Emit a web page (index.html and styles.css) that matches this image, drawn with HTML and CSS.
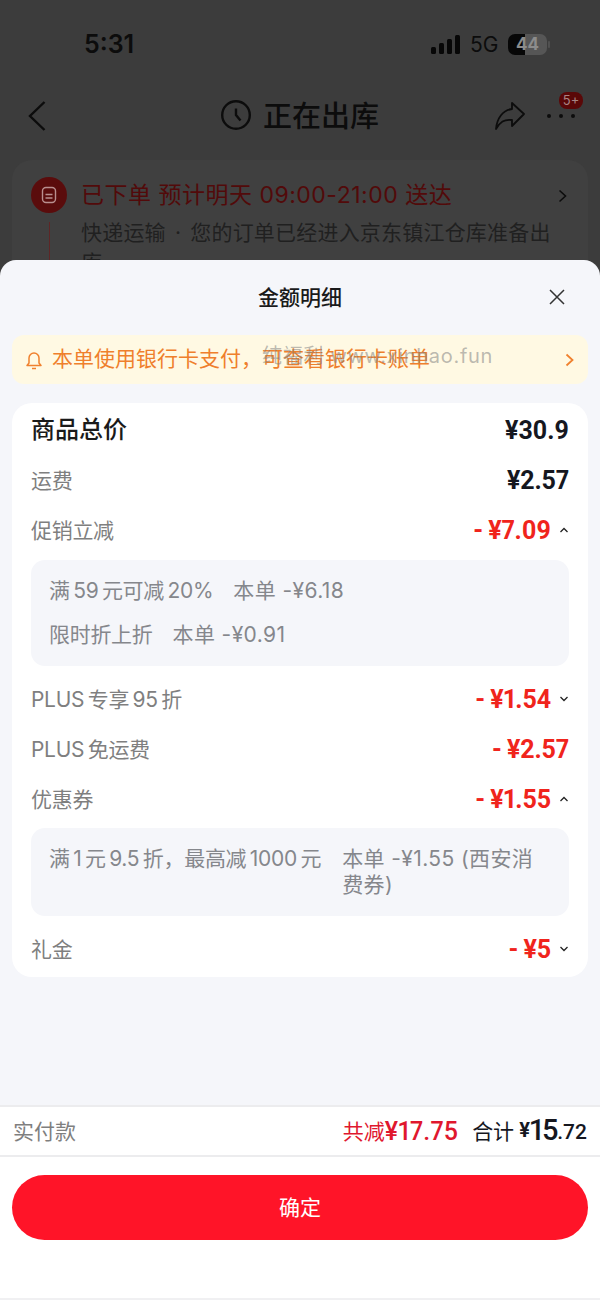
FILE: index.html
```html
<!DOCTYPE html>
<html lang="zh">
<head>
<meta charset="utf-8">
<title>金额明细</title>
<link rel="stylesheet" href="styles.css">
</head>
<body>
<div class="page">
  <div class="behind">
    <div class="status">
      <span class="time">5:31</span>
      <div class="status-right">
        <svg class="signal" width="29" height="19" viewBox="0 0 29 19"><rect x="0" y="12" width="5" height="7" rx="1.500"/><rect x="8" y="8" width="5" height="11" rx="1.500"/><rect x="16" y="4" width="5" height="15" rx="1.500"/><rect x="24" y="0" width="5" height="19" rx="1.500"/></svg>
        <span class="net">5G</span>
        <div class="battery"><span class="battery-num">44</span></div>
        <span class="battery-cap"></span>
      </div>
    </div>
    <div class="nav">
      <svg class="back" width="22" height="32" viewBox="0 0 22 32"><path d="M19.500 3 5 17l14.500 14" fill="none" stroke="#0c0c0c" stroke-width="2.400"/></svg>
      <div class="nav-title">
        <svg width="30" height="30" viewBox="0 0 30 30"><circle cx="15" cy="15" r="13.800" fill="none" stroke="#0c0c0c" stroke-width="2.400"/><path d="M15 8.500V15l4.500 5.500" fill="none" stroke="#0c0c0c" stroke-width="2.400"/></svg>
        <span class="nav-text">正在出库</span>
      </div>
      <svg class="share" width="32" height="30" viewBox="0 0 32 30"><path d="M18 2 30 13 18 25v-6C10 18 6 21 2 28 3 17 9 9 18 8Z" fill="none" stroke="#0c0c0c" stroke-width="1.800" stroke-linejoin="round"/></svg>
      <div class="more"><i></i><i></i><i></i><span class="badge">5+</span></div>
    </div>
    <div class="order">
      <div class="order-head">
        <span class="order-icon"><svg width="16" height="18" viewBox="0 0 16 18"><rect x="1.500" y="1.500" width="13" height="15" rx="3.500" fill="none" stroke="#b98f8f" stroke-width="1.400"/><path d="M4.500 8.500h7M4.500 12h7" stroke="#b98f8f" stroke-width="1.300"/></svg></span>
        <span class="order-title">已下单 预计明天 09:00-21:00 送达</span>
        <svg class="order-arrow" width="9" height="14" viewBox="0 0 9 14"><path d="m1.500 1.500 6 5.500-6 5.500" fill="none" stroke="#0c0c0c" stroke-width="1.600"/></svg>
      </div>
      <div class="order-body">
        <span class="order-line"></span>
        <p class="order-text">快递运输 · 您的订单已经进入京东镇江仓库准备出库</p>
      </div>
    </div>
  </div>

  <div class="sheet">
    <div class="sheet-head">
      <h1 class="sheet-title">金额明细</h1>
      <svg class="close" width="18" height="18" viewBox="0 0 18 18"><path d="M2 2l14 14M16 2 2 16" stroke="#333" stroke-width="1.500" fill="none"/></svg>
    </div>
    <div class="notice">
      <svg width="18" height="22" viewBox="0 0 18 22"><path d="M2 16.500h14l-2-2.500V9a5 5 0 0 0-10 0v5Z" fill="none" stroke="#f0812e" stroke-width="1.500" stroke-linejoin="round"/><path d="M7 19.500h4" stroke="#f0812e" stroke-width="1.500"/></svg>
      <span class="notice-text">本单使用银行卡支付，可查看银行卡账单</span>
      <span class="watermark">纯福利 www.xinhao.fun</span>
      <svg class="notice-arrow" width="9" height="14" viewBox="0 0 9 14"><path d="m1.500 1.500 6 5.500-6 5.500" fill="none" stroke="#f0812e" stroke-width="1.800"/></svg>
    </div>
    <div class="card">
      <div class="row total"><span class="label-main">商品总价</span><span class="amount dark">¥30.9</span></div>
      <div class="row"><span class="label">运费</span><span class="amount dark">¥2.57</span></div>
      <div class="row"><span class="label">促销立减</span><span class="amount red has-caret">- ¥7.09<svg class="caret" width="10" height="6" viewBox="0 0 10 6"><path d="M1.500 5 5 1.500 8.500 5" fill="none" stroke="#222" stroke-width="1.300"/></svg></span></div>
      <div class="detail">
        <div class="detail-line"><span>满&thinsp;59&thinsp;元可减&thinsp;20%</span><span>本单 -¥6.18</span></div>
        <div class="detail-line"><span>限时折上折</span><span>本单 -¥0.91</span></div>
      </div>
      <div class="row"><span class="label">PLUS&thinsp;专享&thinsp;95&thinsp;折</span><span class="amount red has-caret">- ¥1.54<svg class="caret" width="10" height="6" viewBox="0 0 10 6"><path d="M1.500 1 5 4.500 8.500 1" fill="none" stroke="#222" stroke-width="1.300"/></svg></span></div>
      <div class="row"><span class="label">PLUS&thinsp;免运费</span><span class="amount red">- ¥2.57</span></div>
      <div class="row"><span class="label">优惠券</span><span class="amount red has-caret">- ¥1.55<svg class="caret" width="10" height="6" viewBox="0 0 10 6"><path d="M1.500 5 5 1.500 8.500 5" fill="none" stroke="#222" stroke-width="1.300"/></svg></span></div>
      <div class="detail detail-wrap">
        <div class="detail-line"><span class="nowrap">满&thinsp;1&thinsp;元&thinsp;9.5&thinsp;折，最高减&thinsp;1000&thinsp;元</span><span>本单 -¥1.55 (西安消费券)</span></div>
      </div>
      <div class="row"><span class="label">礼金</span><span class="amount red has-caret">- ¥5<svg class="caret" width="10" height="6" viewBox="0 0 10 6"><path d="M1.500 1 5 4.500 8.500 1" fill="none" stroke="#222" stroke-width="1.300"/></svg></span></div>
    </div>
    <div class="spacer"></div>
    <div class="footer">
      <div class="summary">
        <span class="summary-label">实付款</span>
        <div class="summary-right">
          <span class="saved">共减<b>¥17.75</b></span>
          <span class="sum">合计 <b class="sum-y">¥</b><b class="sum-big">15</b><b class="sum-small">.72</b></span>
        </div>
      </div>
      <div class="action"><button class="confirm">确定</button></div>
    </div>
  </div>
</div>
</body>
</html>
```
FILE: styles.css
```css
* { box-sizing: border-box; }
html, body { margin: 0; padding: 0; }
body { font-family: "Inter", "Noto Sans CJK SC", sans-serif; background: #3c3c3c; }
.page { width: 600px; height: 1300px; overflow: hidden; display: flex; flex-direction: column; }

.behind { height: 260px; flex: none; overflow: hidden; background: #3c3c3c; color: #0c0c0c; }
.status { height: 90px; display: flex; justify-content: space-between; align-items: center; padding: 0 50px 2px 84px; }
.time { font-size: 25px; font-weight: 600; width: 60px; }
.status-right { display: flex; align-items: center; }
.signal { fill: #070707; margin-right: 10px; }
.net { font-size: 21px; color: #0c0c0c; margin-right: 11px; width: 27px; }
.battery { width: 39px; height: 21px; border-radius: 7px; background: linear-gradient(90deg, #070707 0 44%, #565656 44% 100%); text-align: center; }
.battery-num { font-size: 17px; line-height: 21px; font-weight: 700; color: #8c8c8c; display: block; }
.battery-cap { width: 2px; height: 7px; background: #505050; border-radius: 1px; margin-left: 1px; }

.nav { height: 50px; position: relative; display: flex; align-items: center; justify-content: center; margin-bottom: 20px; }
.back { position: absolute; left: 25px; top: 9px; }
.nav-title { display: flex; align-items: center; gap: 12px; font-size: 29px; font-weight: 500; line-height: 36px; font-family: "Noto Sans CJK SC", sans-serif; }
.nav-text { padding-bottom: 2px; }
.share { position: absolute; left: 494px; top: 11px; }
.more { position: absolute; left: 547px; top: 24px; display: flex; gap: 8px; }
.more i { width: 4px; height: 4px; border-radius: 50%; background: #0c0c0c; }
.badge { position: absolute; left: 12px; top: -22px; width: 24px; height: 17px; border-radius: 8px; background: #5a0808; color: #a88484; font-size: 13px; line-height: 17px; text-align: center; }

.order { margin: 0 12px; height: 160px; background: #404040; border-radius: 20px; padding: 17px 19px; }
.order-head { display: flex; align-items: center; gap: 14px; height: 36px; position: relative; }
.order-icon { width: 36px; height: 36px; border-radius: 50%; background: #5a0c0c; display: flex; align-items: center; justify-content: center; flex: none; }
.order-title { font-size: 23px; line-height: 34px; letter-spacing: .5px; color: #520a0a; white-space: nowrap; }
.order-arrow { position: absolute; right: 2px; top: 12px; }
.order-body { display: flex; padding-left: 18px; gap: 31px; margin-top: 5px; }
.order-line { width: 1px; height: 50px; background: #5e2626; flex: none; margin-top: 4px; }
.order-text { margin: 0; width: 480px; font-size: 21px; line-height: 30px; letter-spacing: .2px; word-spacing: 3px; color: #202020; }

.sheet { flex: 1; display: flex; flex-direction: column; background: #f5f6fa; border-radius: 16px 16px 0 0; }
.sheet-head { height: 75px; flex: none; position: relative; display: flex; align-items: center; justify-content: center; }
.sheet-title { margin: 0; font-size: 21px; line-height: 75px; font-weight: 500; color: #1a1a1a; }
.close { position: absolute; left: 548px; top: 28px; }

.notice { flex: none; margin: 0 12px; height: 49px; border-radius: 12px; background: #fff9e3; display: flex; align-items: center; padding: 0 14px 0 13px; position: relative; }
.notice-text { font-size: 21px; color: #ef7f2c; margin-left: 9px; padding-bottom: 5px; white-space: nowrap; }
.watermark { position: absolute; left: 250px; top: 6px; font-size: 20px; line-height: 30px; letter-spacing: .7px; color: rgba(130, 130, 130, .55); white-space: nowrap; }
.notice-arrow { margin-left: auto; }

.card { flex: none; margin: 19px 12px 0; height: 574px; background: #fff; border-radius: 20px; padding: 2px 19px 0; }
.row { display: flex; justify-content: space-between; align-items: center; height: 50px; }
.label { font-size: 21px; letter-spacing: -.3px; color: #7f7f7f; padding-bottom: 3px; white-space: nowrap; }
.label-main { font-size: 24px; font-weight: 500; color: #1a1a1a; padding-bottom: 5px; }
.amount { font-family: "Roboto", "Noto Sans CJK SC", sans-serif; font-variant-numeric: proportional-nums; font-size: 25px; font-weight: 700; letter-spacing: -.1px; word-spacing: -1px; white-space: nowrap; display: flex; align-items: center; }
.dark { color: #15171f; }
.red { color: #f0241c; }
.caret { margin-left: 8px; }

.detail { background: #f5f6fa; border-radius: 14px; margin: 5px 0 8px; height: 106px; padding: 9px 18px; }
.detail-wrap { height: 88px; margin: 4px 0 8px; padding-top: 18px; }
.detail-line { display: flex; gap: 20px; font-size: 21px; line-height: 26px; height: 44px; align-items: center; color: #85878c; }
.detail-line span:first-child { letter-spacing: -.3px; }
.detail-line span:last-child { letter-spacing: .4px; }
.detail-wrap .detail-line { height: auto; align-items: flex-start; gap: 21px; }
.nowrap { white-space: nowrap; }

.spacer { flex: 1; }
.footer { flex: none; background: #fff; height: 195px; border-top: 2px solid #ececee; border-bottom: 2px solid #f0f0f2; }
.summary { height: 45px; padding: 0 13px 3px; display: flex; justify-content: space-between; align-items: center; box-sizing: content-box; border-bottom: 2px solid #ececee; }
.summary-label { font-size: 21px; color: #7f7f7f; }
.summary-right { display: flex; align-items: center; gap: 14px; }
.saved { font-size: 21px; color: #e0172e; display: flex; align-items: center; }
.saved b { font-family: "Roboto", sans-serif; font-variant-numeric: proportional-nums; font-size: 25px; font-weight: 500; letter-spacing: .2px; padding-top: 3px; }
.sum { font-size: 21px; color: #15171f; display: flex; align-items: center; }
.sum-y { font-family: "Roboto", sans-serif; font-size: 20px; font-weight: 700; margin-left: 5px; }
.sum-big { font-family: "Roboto", sans-serif; font-variant-numeric: proportional-nums; font-size: 29px; font-weight: 500; letter-spacing: -1.200px; }
.sum-small { font-family: "Roboto", sans-serif; font-size: 21px; font-weight: 500; padding-top: 5px; }
.action { padding: 18px 12px 0; }
.confirm { display: block; width: 576px; height: 65px; border: 0; border-radius: 33px; background: #ff1428; color: #fff; font-size: 21px; font-family: "Noto Sans CJK SC", sans-serif; padding: 0 0 4px; }
```
